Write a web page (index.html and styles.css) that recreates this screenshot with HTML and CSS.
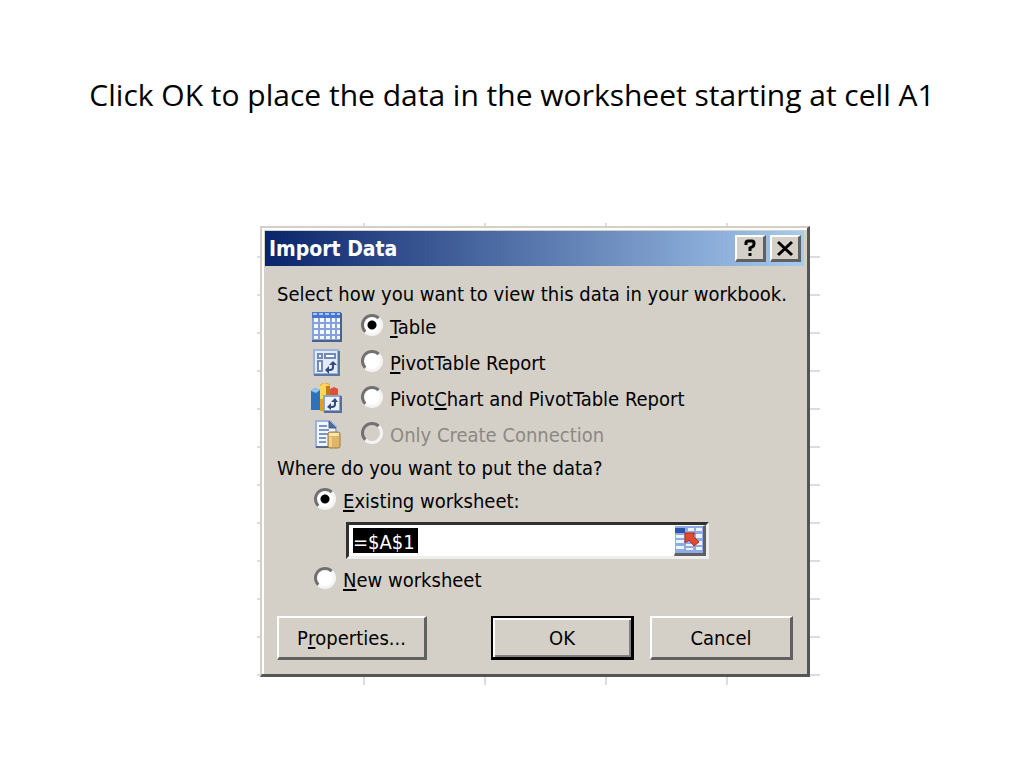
FILE: index.html
```html
<!DOCTYPE html>
<html lang="en">
<head>
  <meta charset="UTF-8">
  <meta name="viewport" content="width=device-width, initial-scale=1.0">
  <title>Import Data</title>
  <link rel="stylesheet" href="styles.css">
</head>
<body>
  <h1>Click OK to place the data in the worksheet starting at cell A1</h1>
  <div class="sheet">
    <form class="dialog">
      <div class="titlebar">
        <h2>Import Data</h2>
        <button type="button" class="caption-btn" aria-label="Help">
          <svg width="20" height="20" viewBox="0 0 20 20"><path d="M6 7V5q0-2 2-2h4q2 0 2 2v1q0 2-2 3l-2 1v3M10 15v3" fill="none" stroke="#000" stroke-width="3"/></svg>
        </button>
        <button type="button" class="caption-btn" aria-label="Close">
          <svg width="20" height="20" viewBox="0 0 20 20"><path d="M3 4L17 17M17 4L3 17" fill="none" stroke="#000" stroke-width="3"/></svg>
        </button>
      </div>
      <div class="content">
        <p>Select how you want to view this data in your workbook.</p>
        <div class="options">
          <div class="option">
            <svg width="32" height="32" viewBox="0 0 32 32">
              <path d="M1 1h29v29H1z" fill="#86a2dc"/>
              <path d="M1 1h29v6H1z" fill="#4a75cf"/>
              <path d="M2 3h27" stroke="#a8c8f8" stroke-width="2" stroke-dasharray="4 2"/>
              <path d="M3 7h4v4H3zM9 7h4v4H9zM15 7h4v4h-4zM21 7h3v4h-3zM26 7h3v4h-3zM3 13h4v4H3zM9 13h4v4H9zM15 13h4v4h-4zM21 13h3v4h-3zM26 13h3v4h-3zM3 19h4v4H3zM9 19h4v4H9zM15 19h4v4h-4zM21 19h3v4h-3zM26 19h3v4h-3zM3 25h4v3H3zM9 25h4v3H9zM15 25h4v3h-4zM21 25h3v3h-3zM26 25h3v3h-3z" fill="#f4f8ff"/>
              <path d="M1 30h29V2" fill="none" stroke="#4b5f92" stroke-width="2"/>
            </svg>
            <input type="radio" name="view" id="view-table" checked>
            <label for="view-table"><u>T</u>able</label>
          </div>
          <div class="option">
            <svg width="32" height="32" viewBox="0 0 32 32">
              <path d="M3 3h24v24H3z" fill="#e2ebfb" stroke="#9bb2dd" stroke-width="2"/>
              <path d="M3 28h25V4" fill="none" stroke="#5d75a5" stroke-width="2"/>
              <path d="M7 7h4v4H7zM14 7h10v4H14zM7 14h4v10H7z" fill="#fff" stroke="#7189b6" stroke-width="2"/>
              <path d="M16 23h3q3 0 3-3v-3" fill="none" stroke="#344b7b" stroke-width="2"/>
              <path d="M14 23l4-4v8zM22 14l-4 4h8z" fill="#344b7b"/>
            </svg>
            <input type="radio" name="view" id="view-pivot">
            <label for="view-pivot"><u>P</u>ivotTable Report</label>
          </div>
          <div class="option">
            <svg width="32" height="32" viewBox="0 0 32 32">
              <path d="M0 8l4-3 5 2v20H0z" fill="#2d72bd"/>
              <path d="M0 8l4-3 5 2-4 3z" fill="#8cc5f1"/>
              <path d="M9 2l4-3 6 2v27H9z" fill="#dfa11b"/>
              <path d="M9 3l4-3 6 2v14H9z" fill="#ffd65c"/>
              <path d="M15 3h4v20h-4z" fill="#c37a10"/>
              <path d="M19 6l4-2 4 2v8h-8z" fill="#dd5035"/>
              <path d="M13 13h16v15H13z" fill="#edf4ff" stroke="#8aa4d6" stroke-width="2"/>
              <path d="M13 29h17V13" fill="none" stroke="#586d98" stroke-width="2"/>
              <path d="M18 24h3q3 0 3-3v-2" fill="none" stroke="#344b7b" stroke-width="2"/>
              <path d="M16 24l4-4v7zM24 15l-4 4h7z" fill="#344b7b"/>
            </svg>
            <input type="radio" name="view" id="view-chart">
            <label for="view-chart">Pivot<u>C</u>hart and PivotTable Report</label>
          </div>
          <div class="option">
            <svg width="32" height="32" viewBox="0 0 32 32">
              <path d="M5 2h14l6 6v20H5z" fill="#f1f6ff" stroke="#9bb2dd" stroke-width="2"/>
              <path d="M18 2l7 7h-7z" fill="#536b98" stroke="#415b89"/>
              <path d="M8 7h8M8 11h10M8 15h9M8 19h7M8 23h7" stroke="#7b95c6" stroke-width="2"/>
              <path d="M5 28h14" stroke="#536994" stroke-width="2"/>
              <rect x="17" y="13" width="12" height="16" rx="2" fill="#dfb568" stroke="#9d7b40"/>
              <path d="M18 14h10v3H18z" fill="#fae6ae"/>
              <path d="M18 18h3v10h-3z" fill="#f1ce8c"/>
            </svg>
            <input type="radio" name="view" id="view-connection" disabled>
            <label for="view-connection">Only Create Connection</label>
          </div>
        </div>
        <p>Where do you want to put the data?</p>
        <div class="places">
          <div class="option">
            <input type="radio" name="place" id="place-existing" checked>
            <label for="place-existing"><u>E</u>xisting worksheet:</label>
          </div>
          <div class="range">
            <input type="text" class="range-text" aria-label="Cell range" value="=$A$1">
            <button type="button" class="range-btn" aria-label="Collapse dialog">
              <svg width="28" height="27" viewBox="0 0 28 27">
                <path d="M0 0h28v27H0z" fill="#8dabe4"/>
                <path d="M0 2h10v5H0z" fill="#2f55ae"/>
                <path d="M13 2h6v3h-6zM21 2h6v3h-6zM1 9h8v3H1zM21 8h6v4h-6zM1 14h8v3H1zM11 18h7v2h-7zM21 15h6v4h-6zM1 20h8v3H1zM11 22h7v2h-7zM21 21h6v3h-6z" fill="#eef4ff"/>
                <path d="M10 7h10l-2 3 6 6-5 4-5-6-4 3z" fill="#e54a31" stroke="#b8281c"/>
              </svg>
            </button>
          </div>
          <div class="option">
            <input type="radio" name="place" id="place-new">
            <label for="place-new"><u>N</u>ew worksheet</label>
          </div>
        </div>
        <div class="actions">
          <button type="button" class="btn btn-properties">P<u>r</u>operties...</button>
          <button type="button" class="btn btn-default">OK</button>
          <button type="button" class="btn">Cancel</button>
        </div>
      </div>
    </form>
  </div>
</body>
</html>
```
FILE: styles.css
```css
* {
  box-sizing: border-box;
}
body {
  margin: 0;
  background: #fff;
  color: #000;
  font-family: "DejaVu Sans Condensed", "Noto Sans", sans-serif;
  font-size: 20px;
}
h1 {
  margin: 73px 0 106px;
  font-family: "Open Sans", "Noto Sans", sans-serif;
  font-size: 30px;
  font-weight: 400;
  line-height: 44px;
  text-align: center;
}
/* worksheet gridlines show round the dialog */
.sheet {
  max-width: 563px;
  margin-left: 257px;
  padding: 3px 10px 8px 3px;
  background:
    repeating-linear-gradient(to right, transparent 0 106px, #dcdce8 106px 108px, transparent 108px 121px),
    repeating-linear-gradient(to bottom, transparent 0 33px, #dcdce8 33px 35px, transparent 35px 38px);
}
.dialog {
  padding: 3px 3px 14px 3px;
  background: #d4d0c8;
  border: 2px solid #d4d0c8;
  border-right: 3px solid #555;
  border-bottom: 3px solid #555;
  box-shadow: inset 2px 2px #fff;
}
.titlebar {
  display: flex;
  align-items: center;
  gap: 4px;
  height: 35px;
  padding: 0 3px 0 4px;
  background: linear-gradient(to right, #0a246a, #a6caf0);
}
.titlebar h2 {
  flex: 1;
  margin: 0;
  color: #fff;
  font-size: 21px;
}
.caption-btn,
.btn,
.range-btn {
  display: flex;
  align-items: center;
  justify-content: center;
  padding: 0;
  background: #d4d0c8;
  border: 2px solid #fff;
  border-right: 3px solid #606060;
  border-bottom: 3px solid #606060;
}
.caption-btn {
  width: 31px;
  height: 27px;
}
.content {
  padding: 13px 11px 0 12px;
}
.content p {
  margin: 0;
  line-height: 30px;
  white-space: nowrap;
}
.options {
  padding-left: 34px;
}
.places {
  padding: 2px 0 0 37px;
}
.option {
  display: flex;
  align-items: center;
  height: 36px;
}
.option svg {
  margin-right: 18px;
}
.option label {
  padding-left: 7px;
}
u {
  text-decoration-thickness: 2px;
  text-underline-offset: 2px;
}
input[type="radio"] {
  appearance: none;
  width: 22px;
  height: 22px;
  margin: 0 0 4px;
  border: 3px solid;
  border-color: #707070 #f4f4f4 #f4f4f4 #707070;
  border-radius: 50%;
  background: #fff;
}
input[type="radio"]:checked {
  background: radial-gradient(circle, #000 0 4px, #fff 5px);
}
input[type="radio"]:disabled {
  background: #d4d0c8;
}
input[type="radio"]:disabled + label {
  color: #8b8984;
}
.places .option {
  height: 32px;
}
.range {
  display: flex;
  align-items: center;
  justify-content: space-between;
  height: 37px;
  margin: 5px 84px 5px 32px;
  padding: 0 0 0 4px;
  background: #fff;
  border: 3px solid #303030;
  border-right: 3px solid #eee;
  border-bottom: 3px solid #eee;
}
.range-text {
  width: 65px;
  height: 25px;
  padding: 2px 0 0;
  border: 0;
  background: #000;
  color: #fff;
  font: inherit;
}
.range-btn {
  width: 32px;
  height: 31px;
  border-width: 1px 3px 3px 1px;
}
.actions {
  display: flex;
  gap: 16px;
  margin-top: 20px;
}
.btn {
  width: 143px;
  height: 44px;
  color: #000;
  font: inherit;
}
.btn-properties {
  width: 150px;
  margin-right: auto;
  white-space: pre;
}
.btn-default {
  border: 2px solid #000;
  border-right-width: 3px;
  border-bottom-width: 3px;
  box-shadow: inset 2px 2px #fff, inset -2px -2px #808080;
}
```
